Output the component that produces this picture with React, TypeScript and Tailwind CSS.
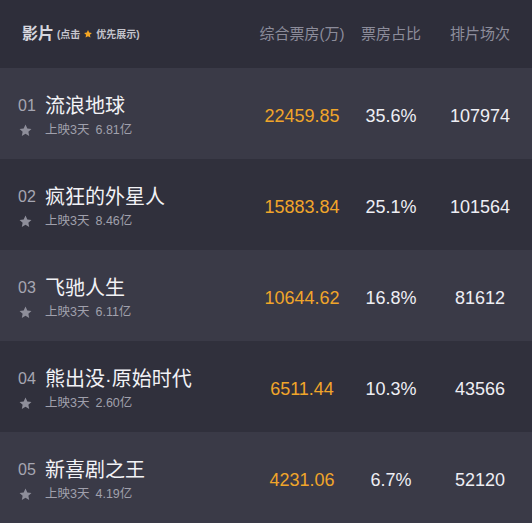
const movies = [
  { rank: "01", name: "流浪地球", days: "上映3天", total: "6.81亿", box: "22459.85", share: "35.6%", shows: "107974" },
  { rank: "02", name: "疯狂的外星人", days: "上映3天", total: "8.46亿", box: "15883.84", share: "25.1%", shows: "101564" },
  { rank: "03", name: "飞驰人生", days: "上映3天", total: "6.11亿", box: "10644.62", share: "16.8%", shows: "81612" },
  { rank: "04", name: "熊出没·原始时代", days: "上映3天", total: "2.60亿", box: "6511.44", share: "10.3%", shows: "43566" },
  { rank: "05", name: "新喜剧之王", days: "上映3天", total: "4.19亿", box: "4231.06", share: "6.7%", shows: "52120" },
];

function Star({ className }: { className: string }) {
  return (
    <svg viewBox="0 0 24 24" className={className} fill="currentColor">
      <path d="M12 2.5l2.9 6.1 6.6.8-4.9 4.6 1.3 6.6L12 17.3l-5.9 3.3 1.3-6.6-4.9-4.6 6.6-.8z" />
    </svg>
  );
}

export default function App() {
  return (
    <div
      className="w-[532px] h-[523px] bg-[#30303c] overflow-hidden"
      style={{ fontFamily: '"Liberation Sans", "Noto Sans CJK SC", sans-serif' }}
    >
      <div className="grid h-[68px] grid-cols-[250px_104px_74px_104px] items-center bg-[#2e2e3a]">
        <div className="flex items-center pl-[22px]">
          <span className="text-[16px] font-bold text-[#d6d6de]">影片</span>
          <span className="ml-[3px] flex items-center text-[10px] font-bold text-[#c4c4cc]">
            (点击
            <Star className="mx-[3px] h-[10px] w-[10px] text-[#f5a623]" />
            优先展示)
          </span>
        </div>
        <div className="text-center text-[15px] text-[#8c8c9a]">综合票房(万)</div>
        <div className="text-center text-[15px] text-[#8c8c9a]">票房占比</div>
        <div className="text-center text-[15px] text-[#8c8c9a]">排片场次</div>
      </div>

      {movies.map((m, i) => (
        <div
          key={m.rank}
          className={
            "grid h-[91px] grid-cols-[250px_104px_74px_104px] items-center " +
            (i % 2 === 0 ? "bg-[#3a3a47]" : "bg-[#30303c]")
          }
        >
          <div className="flex flex-col gap-[2px] pl-[18px] pt-[6px]">
            <div className="flex items-center">
              <span className="w-[27px] text-[16px] text-[#a6a6b2]">{m.rank}</span>
              <span className="text-[20px] leading-[26px] text-[#f2f2f6]">{m.name}</span>
            </div>
            <div className="flex items-center">
              <span className="w-[27px]">
                <Star className="h-[15px] w-[15px] text-[#8e8e9a]" />
              </span>
              <span className="text-[12.5px] text-[#a0a0ac]">
                {m.days}
                <span className="ml-[6px]">{m.total}</span>
              </span>
            </div>
          </div>
          <div className="pt-[6px] text-center text-[18px] text-[#f0a52a]">{m.box}</div>
          <div className="pt-[6px] text-center text-[18px] text-[#eeeef4]">{m.share}</div>
          <div className="pt-[6px] text-center text-[18px] text-[#eeeef4]">{m.shows}</div>
        </div>
      ))}
    </div>
  );
}
